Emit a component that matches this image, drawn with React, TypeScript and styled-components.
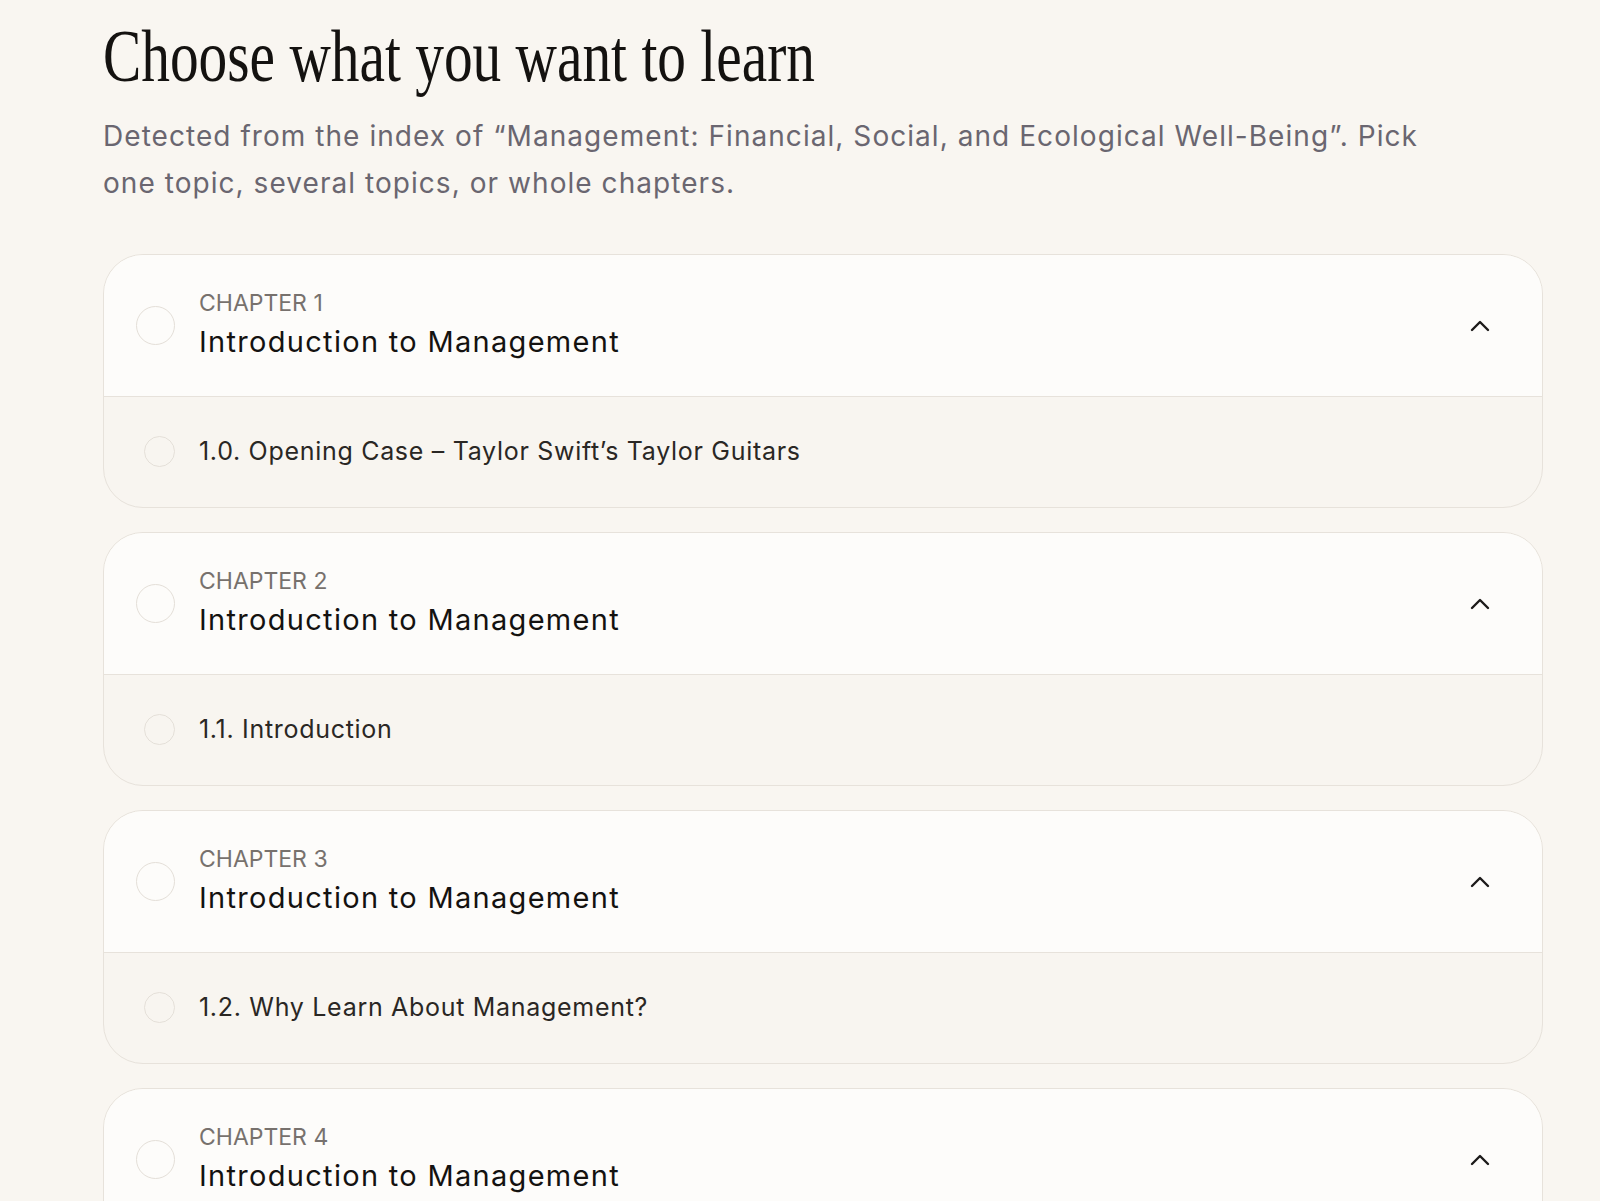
import styled, { createGlobalStyle } from "styled-components";

const GlobalStyle = createGlobalStyle`
  * {
    box-sizing: border-box;
  }
  body {
    margin: 0;
    background: #f9f6f1;
    font-family: Inter, "Noto Sans", sans-serif;
    color: #1c1a19;
  }
`;

const Page = styled.main`
  padding: 19px 0 60px 103px;
  width: 1543px;
`;

const Title = styled.h1`
  margin: 0;
  font-family: "Liberation Serif", "Times New Roman", serif;
  font-weight: 400;
  font-size: 74px;
  line-height: 74px;
  color: #141210;
  white-space: nowrap;
  transform: scaleX(0.775);
  transform-origin: left center;
`;

const Lead = styled.p`
  margin: 20px 0 0;
  max-width: 1340px;
  font-size: 28px;
  line-height: 47px;
  letter-spacing: 1.05px;
  color: #6a6670;
`;

const List = styled.div`
  margin-top: 47px;
  display: flex;
  flex-direction: column;
  gap: 24px;
`;

const Card = styled.section`
  border: 1px solid #e7e2db;
  border-radius: 40px;
  overflow: hidden;
  background: #f8f5f0;
`;

const Header = styled.div`
  display: flex;
  align-items: center;
  gap: 24px;
  height: 142px;
  padding: 0 50px 0 32px;
  background: #fdfcfa;
  border-bottom: 1px solid #e7e2db;
`;

const Radio = styled.span<{ $size: number }>`
  flex: none;
  width: ${(p) => p.$size}px;
  height: ${(p) => p.$size}px;
  border-radius: 50%;
  border: 1.5px solid #e4dfd8;
  background: transparent;
`;

const HeadText = styled.div`
  flex: 1;
  display: flex;
  flex-direction: column;
  gap: 6px;
  padding-bottom: 2px;
`;

const Label = styled.span`
  font-size: 23px;
  line-height: 28px;
  color: #77716d;
  text-transform: uppercase;
`;

const ChapterName = styled.span`
  font-size: 29px;
  line-height: 38px;
  letter-spacing: 1.3px;
  color: #141210;
`;

const Toggle = styled.span`
  flex: none;
  display: flex;
  width: 24px;
  justify-content: center;
  color: #1c1a19;
`;

const Topic = styled.div`
  display: flex;
  align-items: center;
  gap: 24px;
  height: 110px;
  padding: 0 0 2px 40px;
`;

const TopicName = styled.span`
  font-size: 25px;
  line-height: 34px;
  letter-spacing: 0.7px;
  color: #2a2724;
`;

const chapters = [
  { n: 1, topic: "1.0. Opening Case – Taylor Swift’s Taylor Guitars" },
  { n: 2, topic: "1.1. Introduction" },
  { n: 3, topic: "1.2. Why Learn About Management?" },
  { n: 4, topic: "1.3. What Is Management?" },
];

function ChevronUp() {
  return (
    <svg width="22" height="14" viewBox="0 0 22 14" fill="none">
      <polyline
        points="3,11 11,3 19,11"
        stroke="currentColor"
        strokeWidth="2.4"
        strokeLinecap="round"
        strokeLinejoin="round"
      />
    </svg>
  );
}

function App() {
  return (
    <>
      <GlobalStyle />
      <Page>
        <Title>Choose what you want to learn</Title>
        <Lead>
          Detected from the index of “Management: Financial, Social, and Ecological
          Well-Being”. Pick one topic, several topics, or whole chapters.
        </Lead>
        <List>
          {chapters.map((c) => (
            <Card key={c.n}>
              <Header>
                <Radio $size={39} />
                <HeadText>
                  <Label>Chapter {c.n}</Label>
                  <ChapterName>Introduction to Management</ChapterName>
                </HeadText>
                <Toggle>
                  <ChevronUp />
                </Toggle>
              </Header>
              <Topic>
                <Radio $size={31} />
                <TopicName>{c.topic}</TopicName>
              </Topic>
            </Card>
          ))}
        </List>
      </Page>
    </>
  );
}

export default App;
